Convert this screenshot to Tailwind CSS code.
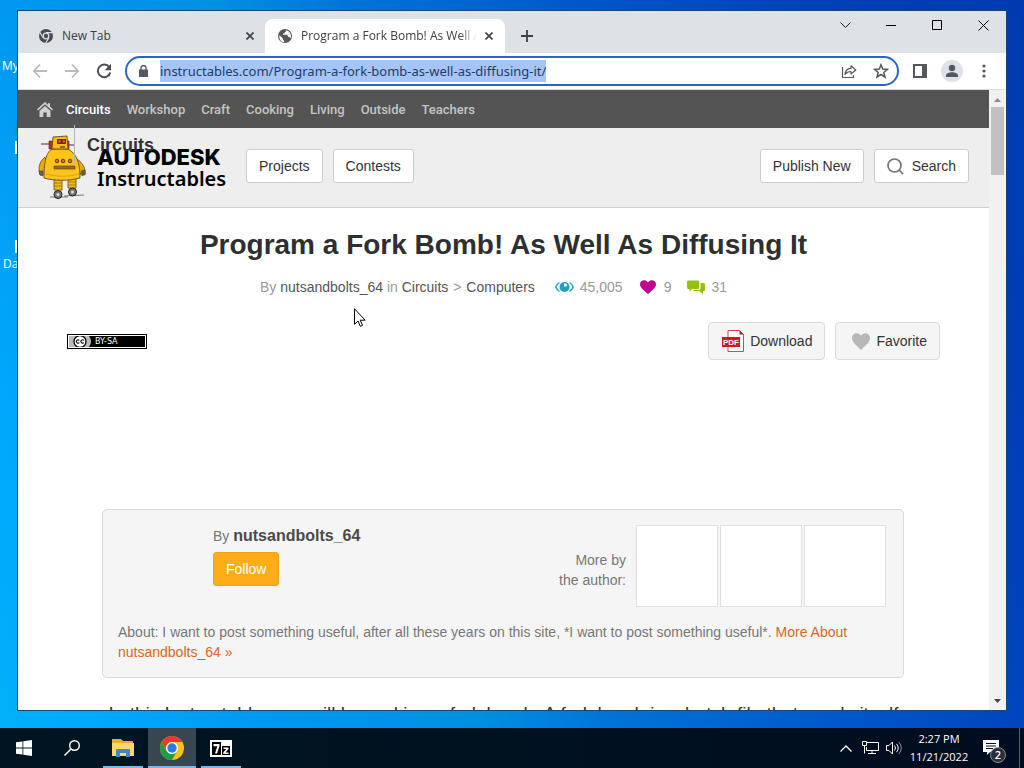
<!DOCTYPE html>
<html lang="en">

<head>
  <meta charset="utf-8"/>
  <meta content="width=device-width, initial-scale=1.0" name="viewport"/>
  <title>Program a Fork Bomb! As Well As Diffusing It</title>
  <script src="https://cdn.jsdelivr.net/npm/@tailwindcss/browser@4"></script>
</head>

<body class="relative flex h-screen flex-col overflow-hidden bg-[linear-gradient(70deg,#00b2f8_0%,#00a8fc_10%,#0098f0_22%,#0090e2_38%,#0074d8_48%,#0054ca_68%,#0040b8_84%,#003ab0_100%)] font-['Open_Sans',sans-serif] text-xs text-[#3c4043]">

<!-- Desktop icon labels behind the window -->
<div class="absolute left-0 top-0 h-full w-[18px] overflow-hidden text-white">
  <span class="absolute left-[2px] top-[58px]">My</span>
  <span class="absolute left-[15px] top-[124px] h-[10px] w-[3px] bg-[#18a08c]"></span>
  <span class="absolute left-[15px] top-[141px] h-[13px] w-[3px] bg-white"></span>
  <span class="absolute left-[15px] top-[240px] h-[13px] w-[3px] bg-white"></span>
  <span class="absolute left-[3px] top-[256px]">Data</span>
</div>

<!-- Browser window -->
<div class="relative mx-[18px] mb-[18px] mt-[11px] flex min-h-0 flex-1 flex-col bg-white ring-1 ring-[#17466f]">

  <!-- Tab strip -->
  <div class="flex h-[42px] shrink-0 items-end bg-[#dee1e6]">
    <div class="flex h-[34px] w-[247px] items-center pl-5 pr-[7px]">
      <svg class="mr-2 size-4 shrink-0" viewBox="0 0 16 16">
        <circle cx="8" cy="8" r="7" fill="#4a4d51"/>
        <circle cx="8" cy="8" r="3.4" fill="#dee1e6"/>
        <circle cx="8" cy="8" r="2.2" fill="#4a4d51"/>
        <path d="M8 4.6h6.4M5.1 9.7 1.9 4.2M10.9 9.7 7.7 15" stroke="#dee1e6" stroke-width="1.1"/>
      </svg>
      <span class="flex-1">New Tab</span>
      <button class="flex size-4 items-center justify-center" aria-label="Close New Tab">
        <svg class="size-2" viewBox="0 0 8 8"><path d="M.5.5l7 7M7.5.5l-7 7" stroke="#3c4043" stroke-width="1.6"/></svg>
      </button>
    </div>
    <div class="flex h-[34px] w-[240px] items-center rounded-t-lg bg-white pl-3 pr-2">
      <svg class="mr-2 size-4 shrink-0" viewBox="0 0 16 16">
        <circle cx="8" cy="8" r="7" fill="#54575b"/>
        <path d="M2.3 7.2 6 10.6v1.2l1.2 1v1.4C4 14 2 11.3 2.3 7.2zM9.3 2.2c-.2 1.3-.7 1.6-1.6 1.9v1.3H6v1.4h4.2l1.1 2.2h1.2l1 1.4c1.3-3.3-.2-7-4.2-8.2z" fill="#fff"/>
      </svg>
      <span class="flex-1 overflow-hidden whitespace-nowrap mask-r-from-90%">Program a Fork Bomb! As Well As</span>
      <button class="ml-1 flex size-4 shrink-0 items-center justify-center" aria-label="Close tab">
        <svg class="size-2" viewBox="0 0 8 8"><path d="M.5.5l7 7M7.5.5l-7 7" stroke="#3c4043" stroke-width="1.6"/></svg>
      </button>
    </div>
    <button class="flex h-[34px] w-11 items-center justify-center" aria-label="New tab">
      <svg class="size-3" viewBox="0 0 12 12"><path d="M6 0v12M0 6h12" stroke="#3c4043" stroke-width="1.8"/></svg>
    </button>
    <div class="ml-auto flex self-start">
      <button class="flex h-7 w-[46px] items-center justify-center" aria-label="Search tabs">
        <svg class="h-[7px] w-[11px]" viewBox="0 0 11 7" fill="none" stroke="#1f1f1f"><path d="M.5.5l5 5 5-5"/></svg>
      </button>
      <button class="flex h-7 w-[46px] items-center justify-center" aria-label="Minimize">
        <svg class="size-[10px]" viewBox="0 0 10 10"><path d="M0 5.5h10" stroke="#000"/></svg>
      </button>
      <button class="flex h-7 w-[46px] items-center justify-center" aria-label="Maximize">
        <svg class="size-[10px]" viewBox="0 0 10 10"><path d="M.5.5h9v9h-9z" fill="none" stroke="#000"/></svg>
      </button>
      <button class="flex h-7 w-[46px] items-center justify-center" aria-label="Close">
        <svg class="size-[11px]" viewBox="0 0 11 11"><path d="M.5.5l10 10M10.5.5l-10 10" stroke="#000"/></svg>
      </button>
    </div>
  </div>

  <!-- Toolbar -->
  <div class="flex h-[37px] shrink-0 items-center border-b border-[#d9dbde] px-[6px]">
    <button class="flex w-8 justify-center" aria-label="Back">
      <svg class="size-4" viewBox="0 0 16 16" fill="none" stroke="#b9bbbe" stroke-width="1.8"><path d="M15 8H2M8 1.5 1.8 8 8 14.5"/></svg>
    </button>
    <button class="flex w-8 justify-center" aria-label="Forward">
      <svg class="size-4" viewBox="0 0 16 16" fill="none" stroke="#b9bbbe" stroke-width="1.8"><path d="M1 8h13M8 1.5 14.2 8 8 14.5"/></svg>
    </button>
    <button class="flex w-8 justify-center" aria-label="Reload">
      <svg class="size-4" viewBox="0 0 16 16"><path d="M13.3 4.2A6.3 6.3 0 1 0 14.3 9.5" fill="none" stroke="#4a4d51" stroke-width="2"/><path d="M15 .8v6.4H8.6z" fill="#4a4d51"/></svg>
    </button>
    <div class="ml-[5px] flex h-[30px] flex-1 items-center rounded-full border-2 border-[#2a66c8] pl-3">
      <svg class="mr-3 h-3 w-[9px] shrink-0" viewBox="0 0 9 12"><path d="M0 4.5h9V12H0z" fill="#54575b"/><path d="M2 5V3a2.500 2.500 0 0 1 5 0v2" fill="none" stroke="#54575b" stroke-width="1.4"/></svg>
      <input class="field-sizing-content h-[22px] bg-[#a6c4f5] font-['Noto_Sans',sans-serif] text-[13px] text-[#1e3d69] outline-none" type="text" aria-label="Address" value="instructables.com/Program-a-fork-bomb-as-well-as-diffusing-it/"/>
      <button class="ml-auto flex w-8 justify-center" aria-label="Share this page">
        <svg class="size-4" viewBox="0 0 16 16" fill="none" stroke="#54575b" stroke-width="1.2"><path d="M1.500 4v10.500h11V12"/><path d="M4 11.500c.3-4 2.500-6 6-6.200V2.800L14.800 7 10 11V8.500c-2.800 0-4.500.8-6 3z" stroke-linejoin="round"/></svg>
      </button>
      <button class="flex w-8 justify-center" aria-label="Bookmark this tab">
        <svg class="size-4" viewBox="0 0 16 16"><path d="M8 1.800l1.700 4.300 4.700.3-3.600 3 1.200 4.600L8 11.500 4 14l1.200-4.600-3.600-3 4.700-.3z" fill="none" stroke="#54575b" stroke-width="1.5"/></svg>
      </button>
    </div>
    <button class="ml-[5px] flex w-8 justify-center" aria-label="Side panel">
      <svg class="size-[14px]" viewBox="0 0 14 14"><path d="M1 1h12v12H1z" fill="none" stroke="#54575b" stroke-width="2"/><path d="M9 1h4v12H9z" fill="#54575b"/></svg>
    </button>
    <button class="flex w-8 justify-center" aria-label="Profile">
      <svg class="size-[22px]" viewBox="0 0 22 22"><circle cx="11" cy="11" r="11" fill="#dfe1e8"/><circle cx="11" cy="8" r="3.2" fill="#54575f"/><path d="M5 17v-1.500c0-2.300 3.500-3.300 6-3.300s6 1 6 3.300V17z" fill="#54575f"/></svg>
    </button>
    <button class="flex w-8 justify-center" aria-label="Menu">
      <svg class="h-[14px] w-1" viewBox="0 0 4 14" fill="#54575b"><circle cx="2" cy="2" r="1.6"/><circle cx="2" cy="7" r="1.6"/><circle cx="2" cy="12" r="1.6"/></svg>
    </button>
  </div>

  <div class="flex min-h-0 flex-1">

    <!-- Page -->
    <div class="relative flex-1 overflow-hidden font-['Liberation_Sans',sans-serif] text-sm/5">

      <nav class="flex h-[38px] items-center gap-4 bg-[#545454] pl-[19px] pt-[2px] font-['Roboto',sans-serif] text-[13px] font-medium text-[#c4c4c4]">
        <a href="#" aria-label="Home" class="-mr-[3px]">
          <svg class="size-4" viewBox="0 0 16 16" fill="#cfcfcf"><path d="M8 0l3 2.700V1.200h2v3.300L16 7.300l-1 1.200-7-6.300-7 6.300L0 7.300z"/><path d="M2.500 8.800 8 3.900l5.500 4.900V15H9.700v-4.500H6.300V15H2.500z"/></svg>
        </a>
        <a href="#" class="text-white">Circuits</a>
        <a href="#">Workshop</a>
        <a href="#">Craft</a>
        <a href="#">Cooking</a>
        <a href="#">Living</a>
        <a href="#">Outside</a>
        <a href="#">Teachers</a>
      </nav>

      <header class="relative flex h-20 items-start gap-[10px] border-b border-[#cfcfcf] bg-[#eee] px-5 pt-[21px] text-[#333]">
        <a href="#" class="-mt-[14px] flex w-[198px] shrink-0 items-start gap-[11px] text-black">
          <!-- Robot mascot -->
          <svg class="h-[66px] w-12 shrink-0" viewBox="0 0 48 66">
            <path d="M3 9h8M30 10h6" stroke="#4a3030" stroke-width="1"/>
            <path d="M12 62H30M26 61l20-1" stroke="#555" stroke-width=".8"/>
            <path d="M16 44h8v11h-8zM30 43h8v10h-8z" fill="#f3b916" stroke="#6b4a0c" stroke-width=".8"/>
            <path d="M16 48h8M16 51h8M30 47h8M30 50h8" stroke="#8a6413" stroke-width=".7"/>
            <circle cx="20" cy="59.5" r="4" fill="#777" stroke="#222"/><circle cx="20" cy="59.5" r="1.5" fill="#ddd"/>
            <circle cx="34.5" cy="57" r="4" fill="#777" stroke="#222"/><circle cx="34.5" cy="57" r="1.5" fill="#ddd"/>
            <path d="M7 22C1 27 0 33 2 40l5-1 2-10zM39 24c6 4 9 10 8 16l-5-1-3-8z" fill="#e6ab16" stroke="#6b4a0c" stroke-width=".8"/>
            <path d="M1 36h4v5l-3-1zM43 36l4-1v4l-3 2z" fill="#61684e" stroke="#444" stroke-width=".6"/>
            <path d="M14 13h16v5H14z" fill="#c98e12"/>
            <path d="M14 14C9 17 6 24 6 43c10 3 25 3 36 0C42 28 39 19 30 14z" fill="#fbc41b" stroke="#6b4a0c" stroke-width=".9"/>
            <path d="M11 6h4v8h-4zM28 6h3v8h-3z" fill="#b6361d" stroke="#5d2112" stroke-width=".6"/>
            <path d="M15 2l14-1 1 13H14z" fill="#f6bd1c" stroke="#6b4a0c" stroke-width=".9"/>
            <path d="M19 4h9v5h-9z" fill="#7c2414"/><circle cx="21.500" cy="6.500" r="1.2" fill="#e05b3a"/><circle cx="26" cy="6.500" r="1.2" fill="#e05b3a"/>
            <path d="M22 12h5" stroke="#6b2b12" stroke-width="1.2"/>
            <g fill="#d66d35" stroke="#5d3b12"><circle cx="19" cy="26" r="1.8"/><circle cx="25" cy="26" r="1.8"/><circle cx="32" cy="26" r="1.8"/></g>
            <path d="M16 31h21v3H16z" fill="#9a6d13" stroke="#5d3b12" stroke-width=".6"/>
            <path d="M8 39c11 3 24 3 33 0" fill="none" stroke="#d69a12" stroke-width=".8"/>
          </svg>
          <span class="whitespace-nowrap pt-3">
            <span class="block font-['Inter',sans-serif] text-[22px]/5 font-extrabold">AUTODESK</span>
            <span class="block font-['Noto_Sans',sans-serif] text-xl/6 font-semibold">Instructables</span>
          </span>
        </a>
        <button class="h-[34px] rounded-[3px] border border-[#ccc] bg-white px-3">Projects</button>
        <button class="h-[34px] rounded-[3px] border border-[#ccc] bg-white px-3">Contests</button>
        <button class="ml-auto h-[34px] rounded-[3px] border border-[#ccc] bg-white px-3">Publish New</button>
        <button class="flex h-[34px] items-center gap-2 rounded-[3px] border border-[#ccc] bg-white px-3">
          <svg class="size-[17px]" viewBox="0 0 17 17" fill="none" stroke="#777" stroke-width="1.7"><circle cx="7.5" cy="7.5" r="6.5"/><path d="M12.2 12.2l4 4"/></svg>
          Search
        </button>
        <!-- Channel menu label hanging over the logo -->
        <span class="absolute -top-[3px] left-14 h-[38px] w-px bg-[#b5b5b5]"></span>
        <span class="absolute left-[69px] top-[5px] text-lg/6 font-bold">Circuits</span>
      </header>

      <main class="text-center">
        <h1 class="mt-[19px] text-[28px]/9 font-bold text-[#2d2f31]">Program a Fork Bomb! As Well As Diffusing It</h1>
        <div class="mt-[14px] flex items-center justify-center pr-5 text-[#999]">
          <span>By <a href="#" class="text-[#555]">nutsandbolts_64</a> in <a href="#" class="text-[#555]">Circuits</a> <span class="px-px">&gt;</span> <a href="#" class="text-[#555]">Computers</a></span>
          <svg class="ml-5 h-3 w-[19px]" viewBox="0 0 19 12"><path d="M4.500 1.500Q2 3 .8 6q1.200 3 3.700 4.500M14.500 1.500Q17 3 18.200 6q-1.200 3-3.700 4.500" fill="none" stroke="#1ba3bf" stroke-width="1.4"/><circle cx="9.500" cy="6" r="5" fill="#1ba3bf"/><path d="M9 2.500a2 2 0 0 1 2.800 2.600L9.500 6z" fill="#fff"/></svg>
          <span class="ml-[6px]">45,005</span>
          <svg class="ml-[17px] h-[14px] w-4" viewBox="0 0 16 14"><path d="M8 14C3 9.500 0 7.500 0 4.200 0 .2 5.500-1.500 8 2.300 10.500-1.500 16 .2 16 4.200 16 7.500 13 9.500 8 14z" fill="#c0058f"/></svg>
          <span class="ml-2">9</span>
          <svg class="ml-4 h-[15px] w-[18px]" viewBox="0 0 18 15"><path d="M1.500.5h9.300q1.500 0 1.500 1.500v5.500Q12.300 9 10.800 9H5L2.500 12V9h-1Q0 9 0 7.500V2Q0 .5 1.500.5z" fill="#97c00d"/><path d="M13.500 3h3Q18 3 18 4.500v5q0 1.500-1.500 1.500H16v3.500L12.500 11h-5Q6.300 11 6.200 10H11q2.500 0 2.500-2.500z" fill="#97c00d"/></svg>
          <span class="ml-[6px]">31</span>
        </div>

        <div class="mx-[49px] mt-[25px] flex items-center gap-[10px] text-[#333]">
          <a href="#" aria-label="Creative Commons license" class="mr-auto flex h-[15px] w-20 border border-black bg-black font-['DejaVu_Sans',sans-serif] text-[8px]/[13px] text-white outline-1 -outline-offset-2 outline-white">
            <svg class="h-[13px] w-6" viewBox="0 0 24 13"><path d="M1 1h20q4 5.500 0 11H1z" fill="#bbb"/><circle cx="12" cy="6.500" r="6" fill="#fff" stroke="#000" stroke-width="1.3"/><path d="M11.300 5.300a1.700 1.700 0 1 0 0 2.400M15.800 5.300a1.700 1.700 0 1 0 0 2.400" fill="none" stroke="#000" stroke-width="1.1"/></svg>
            <span class="pl-[3px]">BY-SA</span>
          </a>
          <button class="flex h-[38px] items-center gap-[5px] rounded-[4px] border border-[#d9d9d9] bg-[#f5f5f5] pl-[13px] pr-3">
            <svg class="h-[22px] w-[23px]" viewBox="0 0 23 22"><path d="M6 .5h11.500l4 4V21.500H6z" fill="#fff" stroke="#c3504e"/><path d="M17.500.5v4H22z" fill="#8b2b2b"/><path d="M0 7h18v10H0z" fill="#d2161b"/><text x="1" y="15" font-family="Liberation Sans" font-size="8" font-weight="bold" fill="#fff">PDF</text></svg>
            Download
          </button>
          <button class="flex h-[38px] items-center gap-[6px] rounded-[4px] border border-[#d9d9d9] bg-[#f5f5f5] pl-4 pr-3">
            <svg class="h-[17px] w-[18px]" viewBox="0 0 16 14" preserveAspectRatio="none"><path d="M8 14C3 9.500 0 7.500 0 4.200 0 .2 5.500-1.500 8 2.300 10.500-1.500 16 .2 16 4.200 16 7.500 13 9.500 8 14z" fill="#b8b8b8"/></svg>
            Favorite
          </button>
        </div>

        <!-- Author card -->
        <section class="ml-[84px] mr-[85px] mt-[149px] rounded-[5px] border border-[#d9d9d9] bg-[#f5f5f5] p-[15px] text-left text-[#777]">
          <div class="flex">
            <div class="w-[95px] shrink-0"></div>
            <div class="pt-px">
              <p>By <a href="#" class="text-base/5 font-bold text-[#4a4a4a]">nutsandbolts_64</a></p>
              <button class="mt-[6px] h-[34px] rounded-[3px] border border-[#efa31c] bg-[#fcad17] px-3 text-white">Follow</button>
            </div>
            <p class="ml-auto mr-[10px] self-center pt-2 text-right">More by<br>the author:</p>
            <div class="mr-[2px] flex gap-[2px]">
              <a href="#" aria-label="First project" class="size-[82px] border border-[#e0e0e0] bg-white"></a>
              <a href="#" aria-label="Second project" class="size-[82px] border border-[#e0e0e0] bg-white"></a>
              <a href="#" aria-label="Third project" class="size-[82px] border border-[#e0e0e0] bg-white"></a>
            </div>
          </div>
          <p class="mt-[15px]">About: I want to post something useful, after all these years on this site, *I want to post something useful*. <a href="#" class="text-[#d2691e]">More About nutsandbolts_64 »</a></p>
        </section>

        <p class="mx-[84px] mt-[22px] whitespace-nowrap text-[19px]/7 text-[#333]">In this Instructable, you will be making a fork bomb. A fork bomb is a batch file that sends itself</p>
      </main>
    </div>

    <!-- Scrollbar -->
    <div class="flex w-[17px] shrink-0 flex-col items-center bg-[#f1f1f1] py-[6px]">
      <svg class="mt-[2px] h-[5px] w-[7px]" viewBox="0 0 7 5"><path d="M3.500 0 7 4H0z" fill="#8a8a8a"/></svg>
      <div class="mt-1 h-[68px] w-[13px] bg-[#c1c1c1]"></div>
      <svg class="mt-auto h-[5px] w-[7px]" viewBox="0 0 7 5"><path d="M3.500 4 7 0H0z" fill="#444"/></svg>
    </div>
  </div>
</div>

<!-- Taskbar -->
<footer class="flex h-10 shrink-0 items-stretch bg-linear-to-r from-[#001521] to-[#000d20] text-white">
  <button class="flex w-12 items-center justify-center" aria-label="Start">
    <svg class="size-4" viewBox="0 0 16 16" fill="#fff"><path d="M0 2.300 6.500 1.400v6.100H0zM7.300 1.300 16 0v7.500H7.300zM0 8.400h6.500v6.200L0 13.700zM7.300 8.400H16V16l-8.700-1.200z"/></svg>
  </button>
  <button class="flex w-12 items-center justify-center" aria-label="Search Windows">
    <svg class="size-4" viewBox="0 0 16 16" fill="none" stroke="#fff" stroke-width="1.4"><circle cx="10.5" cy="5.5" r="4.8"/><path d="M7 9 .5 15.500"/></svg>
  </button>
  <button class="ml-[7px] flex w-10 items-center justify-center border-b-2 border-[#76b9ed]" aria-label="File Explorer">
    <svg class="mt-[2px] h-[18px] w-[22px]" viewBox="0 0 22 18"><path d="M0 0h9l2 2h10v15H0z" fill="#e8ac34"/><path d="M0 4h22v13H0z" fill="#fbd870"/><path d="M4 18v-7q0-1 1-1h12q1 0 1 1v7h-4v-4H8v4z" fill="#3f8ac0"/></svg>
  </button>
  <button class="ml-[5px] flex w-12 items-center justify-center border-b-2 border-[#76b9ed] bg-[#384650]" aria-label="Google Chrome">
    <svg class="mt-[2px] size-6" viewBox="0 0 24 24"><circle cx="12" cy="12" r="12" fill="#fbc116"/><path d="M1.600 6A12 12 0 0 1 22.400 6H12a6 6 0 0 0-5.200 9z" fill="#e33b2e"/><path d="M1.600 6 6.800 15a6 6 0 0 0 10.400 0L12 24A12 12 0 0 1 1.600 6z" fill="#229a48"/><circle cx="12" cy="12" r="6" fill="#fff"/><circle cx="12" cy="12" r="4.7" fill="#2f78e4"/></svg>
  </button>
  <button class="ml-[5px] flex w-10 items-center justify-center border-b-2 border-[#76b9ed]" aria-label="7-Zip">
    <svg class="mt-[2px] h-[17px] w-[22px]" viewBox="0 0 22 17"><path d="M0 0h22v17H0z" fill="#fff"/><path d="M2 2h9v13H2zM12 6h8v9h-8z" fill="#000"/><path d="M3.500 4h6v2L7 13.500H5L7.300 6.300H3.500zM13.500 7.500h5V9l-3 3.500h3V14h-5.200v-1.500L16.200 9h-2.700z" fill="#fff"/></svg>
  </button>

  <div class="ml-auto flex items-center pr-1">
    <button class="flex w-6 justify-center" aria-label="Show hidden icons">
      <svg class="h-[7px] w-3" viewBox="0 0 12 7" fill="none" stroke="#fff" stroke-width="1.3"><path d="M.5 6.500 6 1l5.500 5.500"/></svg>
    </button>
    <button class="flex w-6 justify-center" aria-label="Network">
      <svg class="h-[14px] w-[17px]" viewBox="0 0 17 14" fill="none" stroke="#fff"><path d="M5 1.500h11.500v8H4.500V6M6 12.500h8M10 9.500v3M.5.5h4v4h-4zM2.500 4.500v8"/></svg>
    </button>
    <button class="flex w-6 justify-center" aria-label="Volume">
      <svg class="h-[14px] w-4" viewBox="0 0 16 14" fill="none" stroke="#fff"><path d="M.5 4.500H3L6.500 1v12L3 9.500H.5zM8.500 4.500q2 2.500 0 5M10.500 2.800q3.500 4.200 0 8.400"/><path d="M12.800 1q5 6 0 12" stroke="#8a929a"/></svg>
    </button>
    <div class="w-[66px] text-center text-[11px]/[18px]">2:27 PM<br>11/21/2022</div>
    <button class="relative ml-[10px] w-[37px] self-stretch" aria-label="2 notifications">
      <svg class="absolute left-[1px] top-3 h-[15px] w-4" viewBox="0 0 16 15"><path d="M0 0h16v12H7l-3 3v-3H0z" fill="#fff"/><path d="M3 3.500h10M3 6h10M3 8.500h7" stroke="#001020"/></svg>
      <span class="absolute left-[8px] top-[19px] size-4 rounded-full border border-[#8a8d92] bg-[#2b2f36] text-center text-[11px]/[14px] font-semibold">2</span>
    </button>
    <span class="h-full w-px bg-[#59616b]"></span>
  </div>
</footer>

<!-- Mouse pointer -->
<svg class="absolute left-[354px] top-[308px] h-[19px] w-3" viewBox="0 0 12 19"><path d="M.5.8v15.500l3.500-3.300 2.300 5.300 2.200-1-2.300-5.100h5z" fill="#fff" stroke="#000"/></svg>

</body>
</html>
